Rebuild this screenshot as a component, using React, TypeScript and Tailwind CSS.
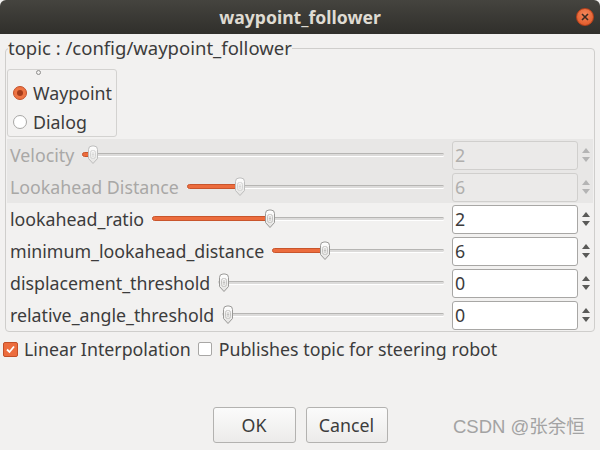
import React from "react";

type Row = { label: string; value: string; pct: number; disabled?: boolean };

const disabledRows: Row[] = [
  { label: "Velocity", value: "2", pct: 0.014, disabled: true },
  { label: "Lookahead Distance", value: "6", pct: 0.193, disabled: true },
];

const rows: Row[] = [
  { label: "lookahead_ratio", value: "2", pct: 0.398 },
  { label: "minimum_lookahead_distance", value: "6", pct: 0.29 },
  { label: "displacement_threshold", value: "0", pct: 0 },
  { label: "relative_angle_threshold", value: "0", pct: 0 },
];

function Handle({ disabled }: { disabled?: boolean }) {
  const stroke = disabled ? "#bdbdbd" : "#999896";
  return (
    <svg width="12" height="20" viewBox="0 0 12 20">
      <defs>
        <linearGradient id="hg" x1="0" y1="0" x2="0" y2="1">
          <stop offset="0" stopColor="#ffffff" />
          <stop offset="1" stopColor="#e4e3e1" />
        </linearGradient>
      </defs>
      <path
        d="M1.5 4.5 Q1.5 1 5 1 H7 Q10.5 1 10.5 4.5 V13.5 L6 18.5 L1.5 13.5 Z"
        fill="url(#hg)"
        stroke={stroke}
      />
      <rect x="3.5" y="5.5" width="5" height="8" rx="2" fill="none" stroke={disabled ? "#d4d4d4" : "#c4c3c1"} />
      <path d="M4.8 8H7.2M4.8 9.5H7.2M4.8 11H7.2" stroke={disabled ? "#d0d0d0" : "#b5b4b2"} strokeWidth="0.8" />
    </svg>
  );
}

function Slider({ pct, disabled }: { pct: number; disabled?: boolean }) {
  return (
    <div className="relative ml-2 h-[22px] flex-1">
      <div className="absolute inset-x-0 top-[9px] h-[3px] rounded-full border-t border-[#b6b5b3] bg-[#dcdbda] shadow-[0_1px_0_#ffffff]" />
      {pct > 0 && (
        <div
          className="absolute left-0 top-[8px] h-[5px] rounded-full border border-[#c9552c] bg-[#ec6c3d]"
          style={{ width: `calc(${pct} * (100% - 12px) + 6px)` }}
        />
      )}
      <div className="absolute top-[1px]" style={{ left: `calc(${pct} * (100% - 12px))` }}>
        <Handle disabled={disabled} />
      </div>
    </div>
  );
}

function SpinBox({ value, disabled }: { value: string; disabled?: boolean }) {
  const arrow = disabled ? "#b4b4b4" : "#5a5a58";
  return (
    <>
      <div
        className={`ml-2 flex h-[29px] w-[126px] items-center rounded-[3px] border pl-[2px] ${
          disabled ? "border-[#d0cfcd] bg-[#ebeae9] text-[#b0afad]" : "border-[#a8a7a5] bg-white text-[#3c3c3c]"
        }`}
      >
        {value}
      </div>
      <div className="flex w-[15px] flex-col items-center gap-[4px] pl-[1px]">
        <svg width="8" height="5" viewBox="0 0 8 5">
          <path d="M0 5L4 0L8 5Z" fill={arrow} />
        </svg>
        <svg width="8" height="5" viewBox="0 0 8 5">
          <path d="M0 0L4 5L8 0Z" fill={arrow} />
        </svg>
      </div>
    </>
  );
}

function ParamRow({ row }: { row: Row }) {
  return (
    <div className="flex h-[32px] items-center pl-[3px]">
      <span className={`whitespace-nowrap ${row.disabled ? "text-[#a9a8a6]" : "text-[#3c3c3c]"}`}>{row.label}</span>
      <Slider pct={row.pct} disabled={row.disabled} />
      <SpinBox value={row.value} disabled={row.disabled} />
    </div>
  );
}

function Radio({ checked, label }: { checked?: boolean; label: string }) {
  return (
    <div className="flex h-[29px] items-center gap-[6px] pl-[5px]">
      {checked ? (
        <span className="flex h-[14px] w-[14px] items-center justify-center rounded-full border border-[#c3502a] bg-[#ee7443]">
          <span className="h-[6px] w-[6px] rounded-full bg-[#a63c1b]" />
        </span>
      ) : (
        <span className="h-[14px] w-[14px] rounded-full border border-[#a8a7a5] bg-white" />
      )}
      <span className="text-[#3c3c3c]">{label}</span>
    </div>
  );
}

export default function App() {
  return (
    <div className="relative h-[450px] w-[600px] overflow-hidden bg-[#f2f1f0] font-['Noto_Sans',sans-serif] text-[17.8px] leading-[24px] text-[#3c3c3c]">
      {/* title bar */}
      <div className="relative flex h-[34px] items-center justify-center rounded-t-[6px] bg-gradient-to-b from-[#45443f] to-[#302f2b]">
        <span className="text-[17.6px] font-bold text-[#dfdbd2]">waypoint_follower</span>
        <span className="absolute right-[6px] top-[8px] flex h-[18px] w-[18px] items-center justify-center rounded-full border border-[#b8401a] bg-[radial-gradient(circle_at_50%_35%,#f5875a,#dd5221)]">
          <svg width="8" height="8" viewBox="0 0 8 8">
            <path d="M1 1L7 7M7 1L1 7" stroke="#3c2a22" strokeWidth="1.6" />
          </svg>
        </span>
      </div>

      <fieldset className="mx-[5px] mt-[3px] rounded-[4px] border border-[#cfcecc]">
        <legend className="ml-[2px] text-[18.5px] leading-[22px] text-[#3c3c3c]">topic : /config/waypoint_follower</legend>

        <div className="relative ml-[1px] mt-[10px] h-[68px] w-[110px] rounded-[3px] border border-[#d3d2d0] pt-[8px]">
          <span className="absolute left-[28px] top-[0px] h-[5px] w-[5px] rounded-full border border-[#8f8e8c] bg-[#f2f1f0]" />
          <Radio checked label="Waypoint" />
          <Radio label="Dialog" />
        </div>

        <div className="mx-[1px] mt-[2px] bg-[#e8e7e6]">
          {disabledRows.map((r) => (
            <ParamRow key={r.label} row={r} />
          ))}
        </div>
        <div className="mx-[1px]">
          {rows.map((r) => (
            <ParamRow key={r.label} row={r} />
          ))}
        </div>
      </fieldset>

      <div className="flex h-[34px] items-center pl-[3px]">
        <span className="flex h-[15px] w-[15px] items-center justify-center rounded-[2px] border border-[#c24f28] bg-[#ec6c3d]">
          <svg width="11" height="11" viewBox="0 0 11 11">
            <path d="M2 5.5L4.5 8L9 2.5" fill="none" stroke="#ffffff" strokeWidth="1.8" />
          </svg>
        </span>
        <span className="ml-[6px]">Linear Interpolation</span>
        <span className="ml-[7px] h-[14px] w-[14px] rounded-[2px] border border-[#a8a7a5] bg-white" />
        <span className="ml-[7px]">Publishes topic for steering robot</span>
      </div>

      <div className="mt-[41px] flex justify-center gap-[10px]">
        <button className="h-[36px] w-[83px] rounded-[3px] border border-[#b3b2b0] bg-gradient-to-b from-[#fbfbfb] to-[#ecebea] text-[#3c3c3c]">
          OK
        </button>
        <button className="h-[36px] w-[82px] rounded-[3px] border border-[#b3b2b0] bg-gradient-to-b from-[#fbfbfb] to-[#ecebea] text-[#3c3c3c]">
          Cancel
        </button>
      </div>

      <span className="absolute left-[453px] top-[415px] font-['Liberation_Sans','Noto_Sans_CJK_SC',sans-serif] text-[18.5px] text-[#a3a3a3]">
        CSDN @张余恒
      </span>
    </div>
  );
}
